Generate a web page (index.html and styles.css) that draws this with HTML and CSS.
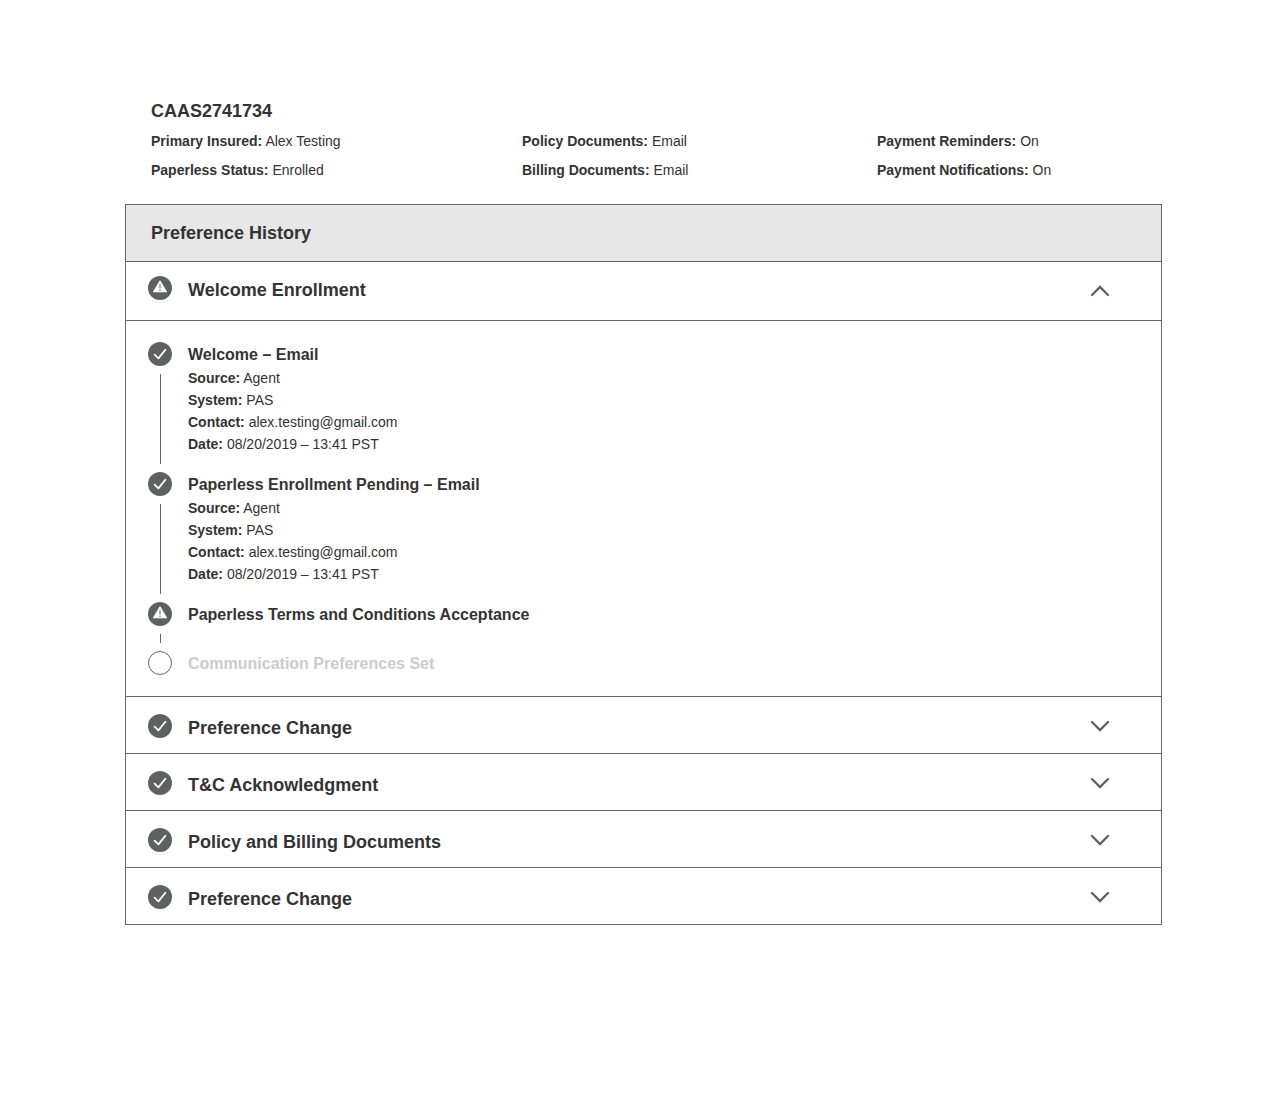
FILE: index.html
```html
<!DOCTYPE html>
<html lang="en">
<head>
<meta charset="utf-8">
<meta name="viewport" content="width=device-width, initial-scale=1">
<title>Preference History</title>
<link rel="stylesheet" href="styles.css">
</head>
<body>
<svg class="sprite" aria-hidden="true">
  <symbol id="check" viewBox="0 0 24 24">
    <circle cx="12" cy="12" r="12" fill="#5f6062"/>
    <path d="M6.6 12.6L10.4 16.4L17.4 7.8" fill="none" stroke="#fff" stroke-width="1.8" stroke-linecap="round" stroke-linejoin="round"/>
  </symbol>
  <symbol id="alert" viewBox="0 0 24 24">
    <circle cx="12" cy="12" r="12" fill="#5f6062"/>
    <path d="M12 4.8L18.6 15.8H5.4Z" fill="#fff" stroke="#fff" stroke-width="1" stroke-linejoin="round"/>
    <path d="M12 8V12.6M12 13.6V15" stroke="#88898b" stroke-width="1.3"/>
  </symbol>
  <symbol id="empty" viewBox="0 0 24 24">
    <circle cx="12" cy="12" r="11.5" fill="#fff" stroke="#666"/>
  </symbol>
  <symbol id="chevron" viewBox="0 0 20 12">
    <path d="M2 2L10 10L18 2" fill="none" stroke="#5f6062" stroke-width="2.3" stroke-linecap="round" stroke-linejoin="miter"/>
  </symbol>
</svg>
<main class="page">
  <header class="summary">
    <h1 class="heading">CAAS2741734</h1>
    <div class="facts">
      <p><b>Primary Insured:</b> Alex Testing</p>
      <p><b>Policy Documents:</b> Email</p>
      <p><b>Payment Reminders:</b> On</p>
      <p><b>Paperless Status:</b> Enrolled</p>
      <p><b>Billing Documents:</b> Email</p>
      <p><b>Payment Notifications:</b> On</p>
    </div>
  </header>
  <section class="history">
    <h2 class="heading history-title">Preference History</h2>
    <button class="row row-open" type="button" aria-expanded="true" aria-controls="steps">
      <svg class="icon"><use href="#alert"/></svg>
      <span class="heading row-label">Welcome Enrollment</span>
      <svg class="chevron chevron-up"><use href="#chevron"/></svg>
    </button>
    <ol class="steps" id="steps">
      <li class="step">
        <div class="rail"><svg class="icon"><use href="#check"/></svg></div>
        <div class="step-body">
          <h3>Welcome – Email</h3>
          <p><b>Source:</b> Agent</p>
          <p><b>System:</b> PAS</p>
          <p><b>Contact:</b> alex.testing@gmail.com</p>
          <p><b>Date:</b> 08/20/2019 – 13:41 PST</p>
        </div>
      </li>
      <li class="step">
        <div class="rail"><svg class="icon"><use href="#check"/></svg></div>
        <div class="step-body">
          <h3>Paperless Enrollment Pending – Email</h3>
          <p><b>Source:</b> Agent</p>
          <p><b>System:</b> PAS</p>
          <p><b>Contact:</b> alex.testing@gmail.com</p>
          <p><b>Date:</b> 08/20/2019 – 13:41 PST</p>
        </div>
      </li>
      <li class="step step-short">
        <div class="rail"><svg class="icon"><use href="#alert"/></svg></div>
        <div class="step-body"><h3>Paperless Terms and Conditions Acceptance</h3></div>
      </li>
      <li class="step step-last">
        <div class="rail"><svg class="icon"><use href="#empty"/></svg></div>
        <div class="step-body"><h3>Communication Preferences Set</h3></div>
      </li>
    </ol>
    <button class="row" type="button" aria-expanded="false">
      <svg class="icon"><use href="#check"/></svg>
      <span class="heading row-label">Preference Change</span>
      <svg class="chevron"><use href="#chevron"/></svg>
    </button>
    <button class="row" type="button" aria-expanded="false">
      <svg class="icon"><use href="#check"/></svg>
      <span class="heading row-label">T&amp;C Acknowledgment</span>
      <svg class="chevron"><use href="#chevron"/></svg>
    </button>
    <button class="row" type="button" aria-expanded="false">
      <svg class="icon"><use href="#check"/></svg>
      <span class="heading row-label">Policy and Billing Documents</span>
      <svg class="chevron"><use href="#chevron"/></svg>
    </button>
    <button class="row" type="button" aria-expanded="false">
      <svg class="icon"><use href="#check"/></svg>
      <span class="heading row-label">Preference Change</span>
      <svg class="chevron"><use href="#chevron"/></svg>
    </button>
  </section>
</main>
</body>
</html>
```
FILE: styles.css
```css
* {
  box-sizing: border-box;
}

body {
  margin: 0;
  background: #fff;
  color: #333;
  font-family: "Liberation Sans", Arial, sans-serif;
  font-size: 14px;
}

h1, h2, h3, p, ol {
  margin: 0;
  padding: 0;
}

.sprite {
  display: none;
}

.page {
  padding: 99px 118px 80px 125px;
}

.summary {
  padding: 0 26px 19px;
}

.heading {
  font-size: 18px;
  font-weight: bold;
  line-height: 24px;
}

.facts {
  display: grid;
  grid-template-columns: 371fr 355fr 259fr;
  padding-top: 4px;
  line-height: 29px;
}

.history {
  border: 1px solid #666;
}

.history-title {
  padding: 16px 25px;
  background: #e7e7e7;
}

.row {
  display: flex;
  align-items: center;
  gap: 16px;
  width: 100%;
  padding: 17px 51px 15px 22px;
  border: 0;
  border-top: 1px solid #666;
  background: #fff;
  color: inherit;
  font-family: inherit;
  text-align: left;
  cursor: pointer;
}

.row-label {
  flex: 1;
  padding-top: 2px;
  margin-bottom: -2px;
}

.row-open {
  padding-top: 14px;
  padding-bottom: 20px;
}

.icon {
  display: block;
  flex: none;
  width: 24px;
  height: 24px;
}

.chevron {
  flex: none;
  width: 20px;
  height: 12px;
}

.chevron-up {
  margin-top: 6px;
  transform: rotate(180deg);
}

.steps {
  padding: 21px 22px 20px;
  border-top: 1px solid #666;
  list-style: none;
}

.step {
  display: flex;
  gap: 16px;
}

.rail {
  display: flex;
  flex-direction: column;
  align-items: center;
}

.rail::after {
  content: "";
  flex: 1;
  width: 1px;
  margin: 8px 0;
  background: #666;
}

.step-last .rail::after {
  display: none;
}

.step-body {
  padding: 1px 0 17px;
  line-height: 22px;
}

.step-short .step-body {
  padding-bottom: 24px;
}

.step-last .step-body {
  padding-bottom: 0;
}

.step h3 {
  font-size: 16px;
  line-height: 24px;
}

.step-last h3 {
  color: #ccc;
}
```
